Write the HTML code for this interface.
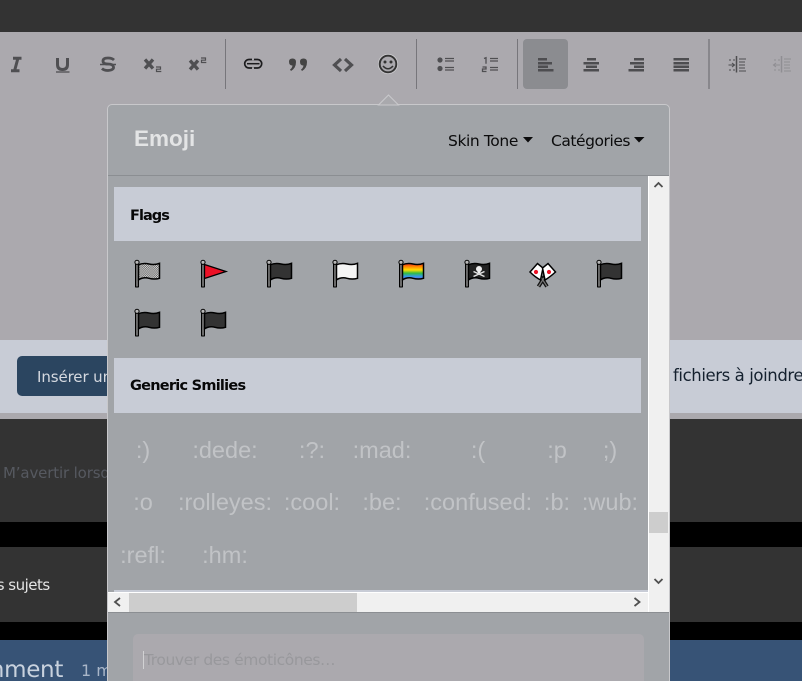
<!DOCTYPE html>
<html lang="fr"><head><meta charset="utf-8"><title>Emoji</title>
<style>
html,body{margin:0;padding:0;width:802px;height:681px;overflow:hidden;background:#aba9ae}
body{position:relative;font-family:"DejaVu Sans","Liberation Sans",sans-serif}
.a{position:absolute}
.t{position:absolute;white-space:nowrap}
.s{position:absolute;white-space:nowrap;width:120px;text-align:center;font:23.5px/28px "Liberation Sans",sans-serif;color:#c1c3c6}
</style></head><body>
<div class="a" style="left:0;top:0;width:802px;height:32px;background:#333"></div>
<div class="a" style="left:0;top:340px;width:802px;height:73px;background:#c8ccd6"></div>
<div class="a" style="left:0;top:419px;width:802px;height:103px;background:#333"></div>
<div class="a" style="left:0;top:522px;width:802px;height:25px;background:#000"></div>
<div class="a" style="left:0;top:547px;width:802px;height:75px;background:#333"></div>
<div class="a" style="left:0;top:622px;width:802px;height:18px;background:#000"></div>
<div class="a" style="left:0;top:640px;width:802px;height:41px;background:#375376"></div>
<div class="a" style="left:17px;top:356px;width:110px;height:40px;border-radius:5px;background:#2b4560"></div>
<div class="t" style="left:37px;top:367px;font-size:15px;line-height:20px;letter-spacing:-.1px;color:#d5d9e0">Insérer un</div>
<div class="t" style="left:673px;top:365px;font-size:16.5px;line-height:22px;letter-spacing:-.4px;color:#14202e">fichiers à joindre</div>
<div class="t" style="left:3px;top:463px;font-size:15px;line-height:20px;letter-spacing:-.15px;color:#565960">M’avertir lorsque</div>
<div class="t" style="left:-12px;top:575px;font-size:15px;line-height:20px;letter-spacing:-.5px;color:#e4e4e4">es sujets</div>
<div class="t" style="left:-18px;top:657px;font-size:23px;line-height:26px;letter-spacing:-.3px;color:#c9d2de">mment</div>
<div class="t" style="left:81px;top:661px;font-size:16px;line-height:20px;color:#a9b6c8">1 min</div>

<svg class="a" style="left:0;top:0" width="802" height="104" viewBox="0 0 802 104" fill="none">
<rect x="523" y="39" width="45" height="50" rx="4" fill="#8b8c90"/>
<g fill="#77767b"><rect x="225" y="39" width="1" height="50"/><rect x="416" y="39" width="1" height="50"/><rect x="517" y="39" width="1" height="50"/><rect x="708" y="39" width="2" height="50" fill="#88878c"/></g>
<g stroke="#4f4f52" stroke-width="2.600">
<path d="M13 58.200h8.500M11 70.800h8.500M18 58l-3.500 13" stroke-width="3"/>
<path d="M57.500 58v6.500q0 5 5 5t5-5v-6.500" stroke-width="3"/><path d="M56 72h13.500" stroke-width="1.300"/>
<path d="M114 60q-2-2-6-2-5 0-5 3t5 3 5.500 3-5.500 3.500q-4 0-6-2" stroke-width="2.800"/><path d="M100 64.500h16" stroke-width="1.500"/>
<path d="M145 59.500l8 9M153 59.500l-8 9M190 60.500l8 9M198 60.500l-8 9" stroke-width="3.300"/>
<path d="M156 67h4.500v2.200h-4v2.300h4.800M201 58h4.500v2.200h-4v2.300h4.800" stroke-width="1.200"/>
<path d="M341 59l-6.500 6 6.500 6M345 59l6.500 6-6.500 6" stroke-width="3.200"/>
</g>
<rect x="244.700" y="59.500" width="17" height="8.500" rx="4.200" stroke="#1c1c1e" stroke-width="1.700"/><path d="M247 63.700h12.500" stroke="#1c1c1e" stroke-width="1.500"/><path d="M253 58.500v1.700M253 67.300v1.700" stroke="#aba9ae" stroke-width="2"/>
<path d="M289 61.500q0-3 3.500-3t3.500 3.500q0 6-5 9l-1-1.500q2.200-1.500 2.500-4-3.500.2-3.500-4zM300 61.500q0-3 3.500-3t3.500 3.500q0 6-5 9l-1-1.500q2.200-1.500 2.500-4-3.500.2-3.500-4z" fill="#444"/>
<circle cx="388" cy="64" r="8.300" stroke="#333" stroke-width="1.900"/><circle cx="388" cy="64" r="9.800" stroke="#d0d0d2" stroke-width=".6"/><circle cx="385" cy="62" r="1.500" fill="#333"/><circle cx="391" cy="62" r="1.500" fill="#333"/><path d="M383 66q5 5.500 10 0" stroke="#333" stroke-width="1.600"/>
<g fill="#4f4f52">
<circle cx="440" cy="60" r="2.600"/><circle cx="440" cy="68.500" r="2.600"/>
</g>
<path d="M445 58.500h9M445 61h9M445 67.500h9M445 70h9M490 58.500h8M490 61h8M490 67.500h8M490 70h8" stroke="#4f4f52" stroke-width="1.300"/>
<path d="M484 58.500l2-.8v6M482.500 67h3.500v2h-3.500v2.500h4" stroke="#4f4f52" stroke-width="1.300"/>
<g fill="#4d4d50">
<rect x="538" y="58" width="9" height="2.500"/><rect x="538" y="62" width="14" height="2.500"/><rect x="538" y="65.500" width="10" height="2.500"/><rect x="538" y="69" width="15.500" height="2.500"/>
<rect x="587" y="58" width="9" height="2.500"/><rect x="583.500" y="62" width="15.500" height="2.500"/><rect x="586" y="65.500" width="11" height="2.500"/><rect x="583.500" y="69" width="15.500" height="2.500"/>
<rect x="634" y="58" width="10" height="2.500"/><rect x="630" y="62" width="14" height="2.500"/><rect x="634" y="65.500" width="10" height="2.500"/><rect x="628.500" y="69" width="15.500" height="2.500"/>
<rect x="673.500" y="58" width="15.500" height="2.500"/><rect x="673.500" y="62" width="15.500" height="2.500"/><rect x="673.500" y="65.500" width="15.500" height="2.500"/><rect x="673.500" y="69" width="15.500" height="2.500"/>
</g>
<g stroke="#4d4d50" stroke-width="1.100"><path d="M736.500 56v16.500" stroke-width="1.500"/><path d="M739 59h7M739 62h6M739 65h6M739 68h6M739 71h7M729 60h2M733 60h2M728.500 65h6M732 63l2.500 2-2.500 2M729 70h2M733 70h2"/></g>
<g stroke="#8f8e93" stroke-width="1.100"><path d="M781.500 56v16.500" stroke-width="1.500"/><path d="M784 59h7M784 62h6M784 65h6M784 68h6M784 71h7M774 60h2M778 60h2M774 65h6M776 63l-2.500 2 2.500 2M774 70h2M778 70h2"/></g>
</svg>

<!-- popover -->
<div class="a" style="left:107px;top:104px;width:561px;height:590px;background:#a1a4a8;border:1px solid #c8c8cb;border-radius:5px 5px 0 0;box-sizing:content-box"></div>
<svg class="a" style="left:377px;top:92px" width="24" height="14" viewBox="0 0 24 14"><path d="M1.500 13L11.500 3l10 10z" fill="#a9a9ad" stroke="#c9c9cc"/><path d="M3 13.500h17v1H3z" fill="#a1a4a8"/></svg>
<div class="t" style="left:134px;top:125px;font:bold 22.500px/28px 'Liberation Sans',sans-serif;color:#e3e4e5">Emoji</div>
<div class="t" style="left:448px;top:131px;font-size:15.500px;line-height:20px;letter-spacing:-.4px;color:#0b0b0c">Skin Tone</div>
<div class="t" style="left:551px;top:131px;font-size:15.500px;line-height:20px;letter-spacing:-.45px;color:#0b0b0c">Catégories</div>
<svg class="a" style="left:520px;top:134px" width="130" height="12"><path d="M3 3h10L8 8.500zM114 3h10.500L119 8.500z" fill="#0b0b0c"/></svg>
<div class="a" style="left:108px;top:175px;width:561px;height:1px;background:#8b8e92"></div>
<div class="a" style="left:114px;top:187px;width:527px;height:54px;background:#c8ccd6"></div>
<div class="t" style="left:130px;top:206px;font-size:14.500px;line-height:20px;font-weight:bold;letter-spacing:-.95px;color:#070708">Flags</div>
<div class="a" style="left:114px;top:358px;width:527px;height:55px;background:#c8ccd6"></div>
<div class="t" style="left:130px;top:376px;font-size:14.500px;line-height:20px;font-weight:bold;letter-spacing:-.75px;color:#070708">Generic Smilies</div>
<div class="a" style="left:114px;top:590px;width:534px;height:2px;background:#c8ccd6"></div>

<svg class="a" style="left:0;top:0" width="802" height="681" viewBox="0 0 802 681">
<defs>
<g id="pole"><rect x="0" y="0" width="4" height="27" rx=".8" fill="#000"/><rect x="1.400" y="2" width="1.200" height="24" fill="#b0b0b0"/><circle cx="2" cy="1.800" r="2.100" fill="#b8b8b8" stroke="#000" stroke-width="1"/></g>
<path id="cloth" d="M3.500 4.200q5-2 10.500-.7t10.500-.7v15q-5 1.500-10.500 0t-10.500 1.500z" stroke="#000" stroke-width="1.500"/>
<pattern id="chk" width="2.200" height="2.200" patternUnits="userSpaceOnUse"><rect width="2.200" height="2.200" fill="#e6e6e6"/><rect width="1.100" height="1.100" fill="#555"/><rect x="1.100" y="1.100" width="1.100" height="1.100" fill="#555"/></pattern>
<linearGradient id="rb" x1="0" y1="0" x2="0" y2="1"><stop offset="0" stop-color="#e22"/><stop offset=".2" stop-color="#f80"/><stop offset=".4" stop-color="#fd0"/><stop offset=".6" stop-color="#3b4"/><stop offset=".8" stop-color="#39e"/><stop offset="1" stop-color="#85c"/></linearGradient>
</defs>
<g transform="translate(135 260.500)"><use href="#pole"/><use href="#cloth" fill="url(#chk)"/></g>
<g transform="translate(201 260.500)"><use href="#pole"/><path d="M3.500 4L25 11 3.500 18z" fill="#ed1126" stroke="#000" stroke-width="1.300"/></g>
<g transform="translate(267 260.500)"><use href="#pole"/><use href="#cloth" fill="#333"/></g>
<g transform="translate(333 260.500)"><use href="#pole"/><use href="#cloth" fill="#f5f5f5"/></g>
<g transform="translate(399 260.500)"><use href="#pole"/><use href="#cloth" fill="url(#rb)"/></g>
<g transform="translate(465 260.500)"><use href="#pole"/><use href="#cloth" fill="#222"/><circle cx="14" cy="8.500" r="3" fill="#eee"/><rect x="12.700" y="10" width="2.600" height="2.500" fill="#eee"/><path d="M8.500 11l11 5M19.500 11l-11 5" stroke="#e4e4e4" stroke-width="1.500"/></g>
<path d="M539 274l8 12.500M546.500 274l-8 12.500" stroke="#111" stroke-width="3.800"/>
<path d="M539 274l8 12.500M546.500 274l-8 12.500" stroke="#777" stroke-width="1.200"/>
<path d="M530 272L537.500 263.500 543 268 540.500 280Q535 277 530 272z" fill="#fff" stroke="#000" stroke-width="1.500"/>
<path d="M555.500 272L548 263.500 542.500 268 545 280Q550 277 555.500 272z" fill="#fff" stroke="#000" stroke-width="1.500"/>
<circle cx="536" cy="272" r="2.100" fill="#ed1126"/><circle cx="549" cy="272" r="2.100" fill="#ed1126"/>
<g transform="translate(597 260.500)"><use href="#pole"/><use href="#cloth" fill="#333"/></g>
<g transform="translate(135 309.500)"><use href="#pole"/><use href="#cloth" fill="#333"/></g>
<g transform="translate(201 309.500)"><use href="#pole"/><use href="#cloth" fill="#333"/></g>
</svg>

<div class="s" style="left:83px;top:436px">:)</div>
<div class="s" style="left:165px;top:436px">:dede:</div>
<div class="s" style="left:252px;top:436px">:?:</div>
<div class="s" style="left:322px;top:436px">:mad:</div>
<div class="s" style="left:418px;top:436px">:(</div>
<div class="s" style="left:497px;top:436px">:p</div>
<div class="s" style="left:550px;top:436px">;)</div>
<div class="s" style="left:83px;top:488px">:o</div>
<div class="s" style="left:165px;top:488px">:rolleyes:</div>
<div class="s" style="left:252px;top:488px">:cool:</div>
<div class="s" style="left:322px;top:488px">:be:</div>
<div class="s" style="left:418px;top:488px">:confused:</div>
<div class="s" style="left:497px;top:488px">:b:</div>
<div class="s" style="left:550px;top:488px">:wub:</div>
<div class="s" style="left:83px;top:541px">:refl:</div>
<div class="s" style="left:165px;top:541px">:hm:</div>

<!-- scrollbars -->
<div class="a" style="left:648px;top:176px;width:21px;height:436px;background:#f0f0f0;border-left:1px solid #fff;box-sizing:border-box"></div>
<div class="a" style="left:649px;top:512px;width:19px;height:21px;background:#cdcdcd"></div>
<div class="a" style="left:108px;top:592px;width:540px;height:20px;background:#f0f0f0;border-top:1px solid #fff;box-sizing:border-box"></div>
<div class="a" style="left:129px;top:593px;width:228px;height:19px;background:#cdcdcd"></div>
<div class="a" style="left:108px;top:612px;width:561px;height:1px;background:#8b8e92"></div>
<svg class="a" style="left:0;top:0" width="802" height="681" fill="none" stroke="#505050" stroke-width="1.800"><path d="M654.500 187l4-4 4 4M654.500 579l4 4 4-4M120 598l-5 4 5 4M634.500 598l5 4-5 4"/></svg>

<div class="a" style="left:133px;top:634px;width:511px;height:60px;border-radius:5px;background:#aba9ae"></div>
<div class="a" style="left:143px;top:651px;width:1px;height:18px;background:#d2d2d4"></div>
<div class="t" style="left:144px;top:649px;font-size:15.500px;line-height:22px;letter-spacing:-.4px;color:#98989c">Trouver des émoticônes…</div>
</body></html>
